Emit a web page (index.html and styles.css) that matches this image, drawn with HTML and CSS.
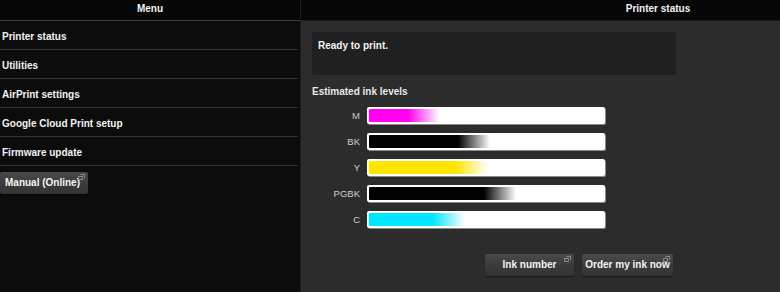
FILE: index.html
```html
<!DOCTYPE html>
<html lang="en">
<head>
    <meta charset="UTF-8">
    <title>Printer status</title>
    <link rel="stylesheet" href="styles.css">
</head>
<body>
    <div class="page">
        <!-- Left menu -->
        <aside class="menu">
            <div class="panel-head">Menu</div>
            <ul class="menu-list">
                <li>Printer status</li>
                <li>Utilities</li>
                <li>AirPrint settings</li>
                <li>Google Cloud Print setup</li>
                <li>Firmware update</li>
            </ul>
            <div class="menu-foot">
                <a class="btn btn-manual">Manual (Online)
                    <svg class="ext" width="7" height="6" viewBox="0 0 7 6"><path d="M2.5 0.5h4v3.5M0.5 2.5h4v3h-4z" fill="none" stroke="#8a8a8a" stroke-width="1"/></svg>
                </a>
            </div>
        </aside>

        <!-- Printer status -->
        <main class="status">
            <div class="panel-head">Printer status</div>
            <div class="status-body">
                <div class="status-box">Ready to print.</div>
                <div class="ink-title">Estimated ink levels</div>

                <div class="ink-list">
                    <div class="ink-row">
                        <span class="ink-label">M</span>
                        <div class="ink-bar"><div class="ink-fill ink-m" style="width: 71px"></div></div>
                    </div>
                    <div class="ink-row">
                        <span class="ink-label">BK</span>
                        <div class="ink-bar"><div class="ink-fill ink-bk" style="width: 121px"></div></div>
                    </div>
                    <div class="ink-row">
                        <span class="ink-label">Y</span>
                        <div class="ink-bar"><div class="ink-fill ink-y" style="width: 119px"></div></div>
                    </div>
                    <div class="ink-row">
                        <span class="ink-label">PGBK</span>
                        <div class="ink-bar"><div class="ink-fill ink-bk" style="width: 147px"></div></div>
                    </div>
                    <div class="ink-row">
                        <span class="ink-label">C</span>
                        <div class="ink-bar"><div class="ink-fill ink-c" style="width: 96px"></div></div>
                    </div>
                </div>

                <div class="actions">
                    <a class="btn btn-ink">Ink number
                        <svg class="ext" width="7" height="6" viewBox="0 0 7 6"><path d="M2.5 0.5h4v3.5M0.5 2.5h4v3h-4z" fill="none" stroke="#8a8a8a" stroke-width="1"/></svg>
                    </a>
                    <a class="btn btn-order">Order my ink now
                        <svg class="ext" width="7" height="6" viewBox="0 0 7 6"><path d="M2.5 0.5h4v3.5M0.5 2.5h4v3h-4z" fill="none" stroke="#8a8a8a" stroke-width="1"/></svg>
                    </a>
                </div>
            </div>
        </main>
    </div>
</body>
</html>
```

FILE: styles.css
```css
/* Page */
body {
    margin: 0;
    background: #2c2c2c;
    overflow: hidden;
    font-family: "Liberation Sans", Arial, sans-serif;
    font-size: 10px;
    font-weight: bold;
    color: #f2f2f2;
}

.page {
    display: flex;
    width: 1015px;
    height: 292px;
}

/* Headers */
.panel-head {
    height: 21px;
    line-height: 17px;
    text-align: center;
    background: #070707;
    border-bottom: 1px solid #2e2e2e;
    box-sizing: border-box;
}

/* Left menu */
.menu {
    width: 300px;
    background: #0c0c0c;
    border-right: 1px solid #1e1e1e;
}

.menu .panel-head {
    border-bottom: 1px solid #3a3a3a;
}

.menu-list {
    list-style: none;
    margin: 0;
    padding: 0;
}

.menu-list li {
    height: 28px;
    line-height: 32px;
    padding-left: 2px;
    border-bottom: 1px solid #353535;
    margin-right: 2px;
}

.menu-foot {
    padding-top: 6px;
}

/* Buttons */
.btn {
    position: relative;
    display: inline-block;
    height: 22px;
    line-height: 22px;
    box-sizing: border-box;
    white-space: nowrap;
    color: #f4f4f4;
    background: linear-gradient(#4a4a4a 0%, #3c3c3c 50%, #333 100%);
    border-radius: 2px;
    box-shadow: 0 1px 1px rgba(0,0,0,0.5);
    text-align: center;
    cursor: pointer;
}

.btn .ext {
    position: absolute;
    top: 2px;
    right: 3px;
}

.btn-manual {
    width: 88px;
    padding-left: 5px;
    text-align: left;
}

.btn-ink {
    width: 89px;
}

.btn-order {
    width: 91px;
}

/* Right panel */
.status {
    width: 714px;
    background: #2c2c2c;
}

.status .panel-head {
    border-bottom-color: #1a1a1a;
}

.status-body {
    padding: 11px 0 0 11px;
}

.status-box {
    width: 364px;
    height: 43px;
    box-sizing: border-box;
    padding: 8px 6px;
    background: #202020;
    border-radius: 3px;
}

.ink-title {
    margin-top: 11px;
    line-height: 12px;
    color: #e8e8e8;
}

/* Ink levels */
.ink-list {
    display: flex;
    flex-direction: column;
    gap: 9px;
    margin-top: 9px;
}

.ink-row {
    display: flex;
    align-items: center;
    gap: 7px;
}

.ink-label {
    width: 48px;
    text-align: right;
    font-size: 9.5px;
    font-weight: normal;
    color: #cfcfcf;
}

.ink-bar {
    width: 238px;
    height: 17px;
    box-sizing: border-box;
    padding: 2px;
    background: #fff;
    border-radius: 2px;
    box-shadow: 1px 1px 0 #8a8a8a;
}

.ink-fill {
    height: 100%;
    border-radius: 1px;
}

.ink-m  { background: linear-gradient(to right, #ff00f0 calc(100% - 32px), #fff); }
.ink-bk { background: linear-gradient(to right, #000 calc(100% - 32px), #fff); }
.ink-y  { background: linear-gradient(to right, #ffe500 calc(100% - 32px), #fff); }
.ink-c  { background: linear-gradient(to right, #00e6ff calc(100% - 32px), #fff); }

/* Action buttons */
.actions {
    display: flex;
    justify-content: flex-end;
    gap: 8px;
    width: 361px;
    margin-top: 26px;
}
```
